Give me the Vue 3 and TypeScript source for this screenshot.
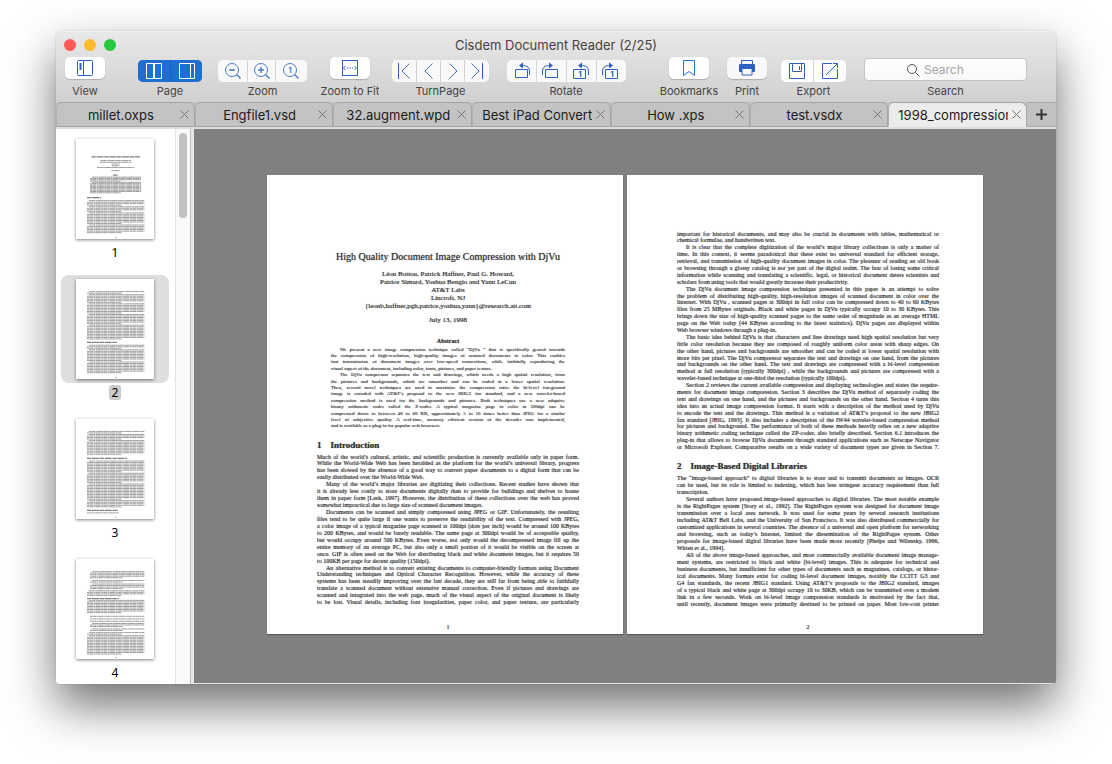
<script setup lang="ts">
import { ref } from 'vue'

interface Line { text: string; first: boolean; last: boolean }
interface Row { x: number; y: number; w: number }

const tabs = ['millet.oxps', 'Engfile1.vsd', '32.augment.wpd', 'Best iPad Convert', 'How .xps', 'test.vsdx', '1998_compression']
const activeTab = ref(6)
const selectedPage = ref(2)
const query = ref('')

function toLines(paragraphs: string[], firstIndented: boolean, lastOpen = false): Line[] {
  return paragraphs.flatMap((p, pi) => {
    const rows = p.trim().split('\n')
    return rows.map((text, i) => ({
      text,
      first: i === 0 && (pi > 0 || firstIndented),
      last: i === rows.length - 1 && !(lastOpen && pi === paragraphs.length - 1),
    }))
  })
}

const authors = [
  'Léon Bottou, Patrick Haffner, Paul G. Howard,',
  'Patrice Simard, Yoshua Bengio and Yann LeCun',
  'AT&T Labs',
  'Lincroft, NJ',
  '{leonb,haffner,pgh,patrice,yoshua,yann}@research.att.com',
]

const abstractText = toLines([
`We present a new image compression technique called “DjVu ” that is specifically geared towards
the compression of high-resolution, high-quality images of scanned documents in color. This enables
fast transmission of document images over low-speed connections, while faithfully reproducing the
visual aspect of the document, including color, fonts, pictures, and paper texture.`,
`The DjVu compressor separates the text and drawings, which needs a high spatial resolution, from
the pictures and backgrounds, which are smoother and can be coded at a lower spatial resolution.
Then, several novel techniques are used to maximize the compression ratio: the bi-level foreground
image is encoded with AT&T’s proposal to the new JBIG2 fax standard, and a new wavelet-based
compression method is used for the backgrounds and pictures. Both techniques use a new adaptive
binary arithmetic coder called the Z-coder. A typical magazine page in color at 300dpi can be
compressed down to between 40 to 60 KB, approximately 5 to 10 times better than JPEG for a similar
level of subjective quality. A real-time, memory efficient version of the decoder was implemented,
and is available as a plug-in for popular web browsers.`,
], true)

const introduction = toLines([
`Much of the world’s cultural, artistic, and scientific production is currently available only in paper form.
While the World-Wide Web has been heralded as the platform for the world’s universal library, progress
has been slowed by the absence of a good way to convert paper documents to a digital form that can be
easily distributed over the World-Wide Web.`,
`Many of the world’s major libraries are digitizing their collections. Recent studies have shown that
it is already less costly to store documents digitally than to provide for buildings and shelves to house
them in paper form [Lesk, 1997]. However, the distribution of these collections over the web has proved
somewhat impractical due to large size of scanned document images.`,
`Documents can be scanned and simply compressed using JPEG or GIF. Unfortunately, the resulting
files tend to be quite large if one wants to preserve the readability of the text. Compressed with JPEG,
a color image of a typical magazine page scanned at 100dpi (dots per inch) would be around 100 KBytes
to 200 KBytes, and would be barely readable. The same page at 300dpi would be of acceptable quality,
but would occupy around 500 KBytes. Even worse, not only would the decompressed image fill up the
entire memory of an average PC, but also only a small portion of it would be visible on the screen at
once. GIF is often used on the Web for distributing black and white document images, but it requires 50
to 100KB per page for decent quality (150dpi).`,
`An alternative method is to convert existing documents to computer-friendly formats using Document
Understanding techniques and Optical Character Recognition. However, while the accuracy of these
systems has been steadily improving over the last decade, they are still far from being able to faithfully
translate a scanned document without extensive manual correction. Even if pictures and drawings are
scanned and integrated into the web page, much of the visual aspect of the original document is likely
to be lost. Visual details, including font irregularities, paper color, and paper texture, are particularly`,
], false, true)

const continued = toLines([
`important for historical documents, and may also be crucial in documents with tables, mathematical or
chemical formulae, and handwritten text.`,
`It is clear that the complete digitization of the world’s major library collections is only a matter of
time. In this context, it seems paradoxical that there exist no universal standard for efficient storage,
retrieval, and transmission of high-quality document images in color. The pleasure of reading an old book
or browsing through a glossy catalog is not yet part of the digital realm. The fear of losing some critical
information while scanning and translating a scientific, legal, or historical document deters scientists and
scholars from using tools that would greatly increase their productivity.`,
`The DjVu document image compression technique presented in this paper is an attempt to solve
the problem of distributing high-quality, high-resolution images of scanned document in color over the
Internet. With DjVu , scanned pages at 300dpi in full color can be compressed down to 40 to 60 KBytes
files from 25 MBytes originals. Black and white pages in DjVu typically occupy 10 to 30 KBytes. This
brings down the size of high-quality scanned pages to the same order of magnitude as an average HTML
page on the Web today (44 KBytes according to the latest statistics). DjVu pages are displayed within
Web browser windows through a plug-in.`,
`The basic idea behind DjVu is that characters and line drawings need high spatial resolution but very
little color resolution because they are composed of roughly uniform color areas with sharp edges. On
the other hand, pictures and backgrounds are smoother and can be coded at lower spatial resolution with
more bits per pixel. The DjVu compressor separates the text and drawings on one hand, from the pictures
and backgrounds on the other hand. The text and drawings are compressed with a bi-level compression
method at full resolution (typically 300dpi) , while the backgrounds and pictures are compressed with a
wavelet-based technique at one-third the resolution (typically 100dpi).`,
`Section 2 reviews the current available compression and displaying technologies and states the require-
ments for document image compression. Section 3 describes the DjVu method of separately coding the
text and drawings on one hand, and the pictures and backgrounds on the other hand. Section 4 turns this
idea into an actual image compression format. It starts with a description of the method used by DjVu
to encode the text and the drawings. This method is a variation of AT&T’s proposal to the new JBIG2
fax standard [JBIG, 1993]. It also includes a description of the IW44 wavelet-based compression method
for pictures and background. The performance of both of these methods heavily relies on a new adaptive
binary arithmetic coding technique called the ZP-coder, also briefly described. Section 6.1 introduces the
plug-in that allows to browse DjVu documents through standard applications such as Netscape Navigator
or Microsoft Explorer. Comparative results on a wide variety of document types are given in Section 7.`,
], false, true)

const libraries = toLines([
`The “image-based approach” to digital libraries is to store and to transmit documents as images. OCR
can be used, but its role is limited to indexing, which has less stringent accuracy requirement than full
transcription.`,
`Several authors have proposed image-based approaches to digital libraries. The most notable example
is the RightPages system [Story et al., 1992]. The RightPages system was designed for document image
transmission over a local area network. It was used for some years by several research institutions
including AT&T Bell Labs, and the University of San Francisco. It was also distributed commercially for
customized applications in several countries. The absence of a universal and open platform for networking
and browsing, such as today’s Internet, limited the dissemination of the RightPages system. Other
proposals for image-based digital libraries have been made more recently [Phelps and Wilensky, 1996,
Witten et al., 1994].`,
`All of the above image-based approaches, and most commercially available document image manage-
ment systems, are restricted to black and white (bi-level) images. This is adequate for technical and
business documents, but insufficient for other types of documents such as magazines, catalogs, or histor-
ical documents. Many formats exist for coding bi-level document images, notably the CCITT G3 and
G4 fax standards, the recent JBIG1 standard. Using AT&T’s proposals to the JBIG2 standard, images
of a typical black and white page at 300dpi occupy 10 to 30KB, which can be transmitted over a modem
link in a few seconds. Work on bi-level image compression standards is motivated by the fact that,
until recently, document images were primarily destined to be printed on paper. Most low-cost printer`,
], false, true)

/* Rows of a paragraph block: `counts` holds the number of rows per paragraph. */
function block(y: number, counts: number[], x = 50, w = 262, pitch = 7): Row[] {
  const rows: Row[] = []
  for (const n of counts) {
    for (let i = 0; i < n; i++) {
      const indent = i === 0 ? 9 : 0
      const width = i === n - 1 && n > 1 ? w * 0.6 : w
      rows.push({ x: x + indent, y, w: width - indent })
      y += pitch
    }
  }
  return rows
}
const centred = (y: number, w: number): Row => ({ x: 181 - w / 2, y, w })

const thumbs = [
  {
    n: 1,
    rows: [centred(99, 141), centred(107, 144), centred(115, 36), centred(123, 36), centred(131, 171), centred(145, 40),
      ...block(175, [4, 9], 64, 234, 6), ...block(283, [4, 4, 8, 6])],
    heads: [centred(82, 221), centred(166, 24), { x: 50, y: 269, w: 65 }],
  },
  {
    n: 2,
    rows: [...block(58, [2, 6, 7, 7, 10]), ...block(304, [3, 8, 8])],
    heads: [{ x: 50, y: 291, w: 136 }],
  },
  {
    n: 3,
    rows: [...block(57, [2, 4, 10]), ...block(193, [8, 7, 11, 5]), { x: 50, y: 431, w: 146 }],
    heads: [{ x: 50, y: 181, w: 184 }, { x: 50, y: 419, w: 142 }],
  },
  {
    n: 4,
    rows: [...block(58, [5], 64, 248), ...block(99, [2], 64, 248), ...block(115, [4], 64, 248), ...block(146, [4]),
      ...block(190, [9]), ...block(263, [1], 55, 257), ...block(275, [1], 55, 257), ...block(286, [1], 55, 257),
      ...block(296, [3], 64, 248), ...block(321, [2], 64, 248), ...block(338, [2, 13])],
    heads: [{ x: 50, y: 182, w: 145 }],
  },
]
</script>

<template>
  <div class="desktop">
    <main class="window">
      <header class="titlebar">
        <div class="title-row">
          <div class="lights">
            <button class="light red" aria-label="Close"></button>
            <button class="light yellow" aria-label="Minimize"></button>
            <button class="light green" aria-label="Full screen"></button>
          </div>
          <h1>Cisdem Document Reader (2/25)</h1>
        </div>

        <div class="toolbar">
          <div class="tool view">
            <div class="slot"><button class="pill" aria-label="View">
              <svg width="18" height="18"><rect x="1.500" y="1.500" width="15" height="15" rx="1" /><path d="M7.500 1.500v15" /><path d="M4.500 4v7" stroke-width="2" /></svg>
            </button></div>
            <span>View</span>
          </div>

          <div class="tool page-mode">
            <div class="slot"><div class="seg selected low">
              <button aria-label="Two pages"><svg width="18" height="18"><path d="M1.500 1.500h15v15h-15zM8.500 1.500v15M9.500 1.500v15" /></svg></button>
              <button aria-label="Single page"><svg width="18" height="18"><path d="M1.500 1.500h15v15h-15zM12.500 1.500v15" /></svg></button>
            </div></div>
            <span>Page</span>
          </div>

          <div class="tool zoom">
            <div class="slot"><div class="seg low lens">
              <button aria-label="Zoom out"><svg width="18" height="18"><circle cx="8" cy="8" r="6.500" /><path d="M12.500 12.500l4 4M5 8h6" stroke-width="1.500" /></svg></button>
              <button aria-label="Zoom in"><svg width="18" height="18"><circle cx="8" cy="8" r="6.500" /><path d="M12.500 12.500l4 4M5 8h6M8 5v6" stroke-width="1.500" /></svg></button>
              <button aria-label="Actual size"><svg width="18" height="18"><circle cx="8" cy="8" r="6.500" /><path d="M12.500 12.500l4 4" stroke-width="1.500" /><text x="8" y="11">1</text></svg></button>
            </div></div>
            <span>Zoom</span>
          </div>

          <div class="tool fit">
            <div class="slot"><button class="pill" aria-label="Zoom to Fit">
              <svg width="18" height="18"><rect x="1.500" y="1.500" width="15" height="15" /><path d="M4.500 7l-2 2 2 2M13.500 7l2 2-2 2" /><path d="M6 9h6" stroke-dasharray="1.500 1" /></svg>
            </button></div>
            <span>Zoom to Fit</span>
          </div>

          <div class="tool turn">
            <div class="slot"><div class="seg low">
              <button aria-label="First page"><svg width="18" height="18"><path d="M3.500 1v16" /><path class="thin" d="M14.500 1.500L7 9l7.500 7.500" /></svg></button>
              <button aria-label="Previous page"><svg width="18" height="18"><path class="thin" d="M12.500 1.500L5 9l7.500 7.500" /></svg></button>
              <button aria-label="Next page"><svg width="18" height="18"><path class="thin" d="M5.500 1.500L13 9l-7.500 7.500" /></svg></button>
              <button aria-label="Last page"><svg width="18" height="18"><path class="thin" d="M3.500 1.500L11 9l-7.500 7.500" /><path d="M14.500 1v16" /></svg></button>
            </div></div>
            <span>TurnPage</span>
          </div>

          <div class="tool rotate">
            <div class="slot"><div class="seg low">
              <button aria-label="Rotate all left"><svg width="20" height="18"><path d="M4.500 7.500h12v8h-12zM18.500 13V9q0-5-6-5.500H9" /><path class="tip" d="M8 3.500l4-3v6z" /></svg></button>
              <button aria-label="Rotate all right"><svg width="20" height="18"><path d="M4.500 7.500h12v8h-12zM1.500 13V9q0-5 6-5.500H11" /><path class="tip" d="M12 3.500l-4-3v6z" /></svg></button>
              <button aria-label="Rotate page left"><svg width="20" height="18"><path d="M2.500 7.500h12v9h-12zM17.500 13V9q0-5-6-5.500H9" /><path class="tip" d="M7 3.500l4-3v6z" /><text x="9" y="15">1</text></svg></button>
              <button aria-label="Rotate page right"><svg width="20" height="18"><path d="M4.500 7.500h12v9h-12zM1.500 13V9q0-5 6-5.500H11" /><path class="tip" d="M12 3.500l-4-3v6z" /><text x="11" y="15">1</text></svg></button>
            </div></div>
            <span>Rotate</span>
          </div>

          <div class="tool bookmarks">
            <div class="slot"><button class="pill" aria-label="Bookmarks">
              <svg width="18" height="18"><path class="bright" d="M3.500 1.500h11v15l-5.500-4-5.500 4z" /></svg>
            </button></div>
            <span>Bookmarks</span>
          </div>

          <div class="tool print">
            <div class="slot"><button class="pill soft" aria-label="Print">
              <svg width="18" height="18"><path d="M3.500 5V1.500h11V5" /><path class="solid" d="M1 6q0-1 1-1h14q1 0 1 1v6q0 1-1 1H2q-1 0-1-1z" /><path class="paper" d="M4 9.500h10v6.500H4z" /></svg>
            </button></div>
            <span>Print</span>
          </div>

          <div class="tool export">
            <div class="slot"><div class="seg low white">
              <button aria-label="Save"><svg width="18" height="18"><path d="M1.500 1.500h15v15h-15zM4.500 1.500v8h9v-8M11.500 4v4" /></svg></button>
              <button aria-label="Export"><svg width="18" height="18"><path d="M11 1.500H1.500v15h15V7M5 13L16.500 1.500M12 1.500h4.500V6" /></svg></button>
            </div></div>
            <span>Export</span>
          </div>

          <div class="tool search">
            <div class="slot">
              <div class="field">
                <svg width="14" height="14"><circle cx="6" cy="6" r="4.500" /><path d="M9.500 9.500l4 4" /></svg>
                <input id="search" v-model="query" type="text" placeholder="Search" />
              </div>
            </div>
            <label for="search">Search</label>
          </div>
        </div>
      </header>

      <nav class="tabs">
        <div v-for="(name, i) in tabs" :key="name" class="tab" :class="{ active: i === activeTab }">
          <button class="name" @click="activeTab = i">{{ name }}</button>
          <button class="close" :aria-label="'Close ' + name">
            <svg width="9" height="9"><path d="M.5.5l8 8M8.500.5l-8 8" /></svg>
          </button>
        </div>
        <button class="add" aria-label="New tab"><svg width="13" height="13"><path d="M6.500 1v11M1 6.500h11" /></svg></button>
      </nav>

      <div class="body">
        <aside class="sidebar">
          <div class="list">
            <button v-for="t in thumbs" :key="t.n" class="thumb" :class="{ selected: t.n === selectedPage }" @click="selectedPage = t.n">
              <span class="frame">
                <svg class="mini" viewBox="0 0 356 459" preserveAspectRatio="none">
                  <path v-for="(r, i) in t.rows" :key="i" class="row" :d="`M${r.x} ${r.y}h${r.w}`" />
                  <path v-for="(r, i) in t.heads" :key="'h' + i" class="head" :d="`M${r.x} ${r.y}h${r.w}`" />
                  <path class="row" d="M178 452h6" />
                </svg>
              </span>
              <span class="number">{{ t.n }}</span>
            </button>
          </div>
          <div class="scroll"><div class="handle"></div></div>
        </aside>

        <section class="viewer">
          <article class="sheet">
            <h2 class="doc-title">High Quality Document Image Compression with DjVu</h2>
            <div class="authors"><div v-for="a in authors" :key="a">{{ a }}</div></div>
            <div class="date">July 13, 1998</div>
            <h3 class="abstract-title">Abstract</h3>
            <div class="copy abstract">
              <div v-for="(l, i) in abstractText" :key="i" class="line" :class="{ first: l.first, last: l.last }">{{ l.text }}</div>
            </div>
            <h3 class="section"><span>1</span>Introduction</h3>
            <div class="copy intro">
              <div v-for="(l, i) in introduction" :key="i" class="line" :class="{ first: l.first, last: l.last }">{{ l.text }}</div>
            </div>
            <footer>1</footer>
          </article>
          <article class="sheet second">
            <div class="copy continued">
              <div v-for="(l, i) in continued" :key="i" class="line" :class="{ first: l.first, last: l.last }">{{ l.text }}</div>
            </div>
            <h3 class="section"><span>2</span>Image-Based Digital Libraries</h3>
            <div class="copy libraries">
              <div v-for="(l, i) in libraries" :key="i" class="line" :class="{ first: l.first, last: l.last }">{{ l.text }}</div>
            </div>
            <footer>2</footer>
          </article>
        </section>
      </div>
    </main>
  </div>
</template>

<style>
body { background: #fff; }
</style>

<style scoped>
* { box-sizing: border-box; margin: 0; }
.desktop {
  height: 100vh;
  padding: 31px 56px 80px;
  overflow: hidden;
  font-family: Inter, Roboto, "Liberation Sans", sans-serif;
  color: #444;
}
.window {
  display: flex;
  flex-direction: column;
  height: 100%;
  border-radius: 5px;
  background: #ececec;
  box-shadow: 0 0 1px rgba(0, 0, 0, .5), 0 22px 48px rgba(0, 0, 0, .56);
}
button { border: 0; padding: 0; background: none; font: inherit; color: inherit; }
svg { display: block; fill: none; stroke: #2f5fc0; }
svg text { fill: #2f5fc0; stroke: none; font-size: 8px; font-weight: 700; text-anchor: middle; }

.titlebar {
  height: 71px;
  flex: none;
  border-radius: 5px 5px 0 0;
  border-top: 1px solid #f4f4f4;
  background: linear-gradient(#e8e8e8, #d0d0d0);
}
.title-row { display: grid; grid-template-columns: 1fr auto 1fr; height: 25px; align-items: center; padding: 0 8px; }
.title-row h1 { font-size: 13px; font-weight: 400; color: #444; line-height: 24px; }
.lights { display: flex; gap: 8px; }
.light { width: 12px; height: 12px; border-radius: 50%; }
.red { background: #fc5b57; }
.yellow { background: #fdbc2e; }
.green { background: #27c93f; }

.toolbar { display: flex; padding: 0 29px 0 9px; }
.tool { display: flex; flex-direction: column; align-items: center; font-size: 11px; line-height: 14px; color: #444; white-space: nowrap; }
.slot { height: 27px; display: flex; align-items: flex-start; }
.tool.search .slot { padding-top: 1px; width: 100%; }
.low { margin-top: 3px; }
.view { width: 40px; }
.page-mode { width: 64px; margin-left: 33px; }
.zoom { width: 89px; margin-left: 16px; }
.fit { width: 60px; margin-left: 13px; }
.turn { width: 97px; margin-left: 12px; }
.rotate { width: 118px; margin-left: 18px; }
.bookmarks { width: 58px; margin-left: auto; }
.print { width: 40px; margin-left: 9px; }
.export { width: 65px; margin-left: 14px; }
.search { width: 163px; margin-left: 18px; }
.pill { width: 40px; height: 22px; border-radius: 5px; background: #fff; box-shadow: 0 1px 1px rgba(0, 0, 0, .2); display: grid; place-items: center; }
.pill.soft { background: #f8f8f8; }
.seg { display: flex; height: 22px; gap: 1px; border-radius: 5px; overflow: hidden; background: #d4d4d4; }
.seg button { display: grid; place-items: center; background: #f9f9f9; }
.seg.white button { background: #fff; }
.selected.seg { background: #1a5cb4; gap: 0; }
.selected.seg button { width: 32px; background: #1f6ed2; }
.selected.seg button + button { border-left: 1px dashed #1857b0; }
.selected.seg svg { stroke: #fff; }
.lens button { width: 29px; }
.lens button:nth-child(2) { width: 27px; }
.lens button:last-child { width: 31px; padding-right: 2px; }
.lens svg { stroke: #4a7cc8; }
.lens svg text { fill: #4a7cc8; }
.turn .seg button { width: 23px; }
.turn .seg button:first-child, .turn .seg button:last-child { width: 24px; }
.rotate .seg button { width: 29px; }
.export .seg button { width: 32px; }
.bright { stroke: #1f72d8; }
.solid { fill: #2f5fc0; stroke: none; }
.tip { fill: #2f5fc0; stroke: none; }
.paper { fill: #fff; stroke: #2f5fc0; }
.thin { stroke: #4470c4; }

.field {
  display: flex; width: 100%; height: 23px; align-items: center; gap: 4px; padding-left: 41px;
  border: 1px solid #c4c4c4; border-radius: 4px; background: linear-gradient(#fff, #f8f8f8);
}
.field svg { flex: none; stroke: #555; }
.field input { width: 100%; min-width: 0; border: 0; outline: 0; padding: 0; background: none; font: inherit; font-size: 12px; color: #333; }
.field input::placeholder { color: #a6a6a6; opacity: 1; }

.tabs { display: flex; flex: none; height: 27px; background: #c2c2c2; border-bottom: 2px solid #dedede; }
.tab {
  flex: 1 1 0; min-width: 0; display: flex; align-items: center; gap: 1px; padding: 0 2px 0 9px;
  border: 1px solid #a4a4a4; border-left-color: #b0b0b0; border-radius: 6px 6px 0 0; background: #c3c3c3; color: #1c1c1c;
}
.tab.active { background: #ececec; border-bottom-color: #ececec; }
.name { flex: 1; min-width: 0; font-size: 13px; line-height: 20px; overflow: hidden; white-space: nowrap; }
.close { flex: none; width: 15px; height: 15px; display: grid; place-items: center; }
.close svg { stroke: #777; }
.add { flex: none; width: 29px; display: grid; place-items: center; border-top: 1px solid #a9a9a9; border-bottom: 1px solid #a9a9a9; }
.add svg { stroke: #333; stroke-width: 2; }

.body { flex: 1; min-height: 0; display: flex; border-radius: 0 0 4px 4px; overflow: hidden; }
.sidebar { flex: none; width: 138px; display: flex; background: #e8e8e8; }
.list { flex: 1; overflow: hidden; background: #fff; padding: 6px 6px 0 5px; display: flex; flex-direction: column; gap: 15px; }
.thumb { flex: none; display: flex; flex-direction: column; align-items: center; gap: 2px; }
.frame { width: 108px; height: 108px; border-radius: 8px; display: grid; place-items: center; }
.mini { width: 78px; height: 100px; background: #fff; box-shadow: 0 1px 3px rgba(0, 0, 0, .5); }
.row { stroke: #8c8c8c; stroke-width: 4; stroke-dasharray: 11 1 17 2 7 1 24 2; }
.head { stroke: #808080; stroke-width: 6; stroke-dasharray: 20 3 32 3; }
.number { padding: 0 3px; border-radius: 3px; font-family: "Noto Sans", sans-serif; font-size: 12px; line-height: 15px; color: #000; }
.thumb.selected .frame { background: #dedede; }
.thumb.selected .number { background: #cacaca; }
.scroll { width: 16px; flex: none; padding: 4px 3px; background: #f9f9f9; border-left: 1px solid #e4e4e4; border-right: 1px solid #bcbcbc; margin-right: 3px; }
.handle { width: 8px; height: 85px; border-radius: 4px; background: #c1c1c1; }

.viewer { flex: 1; display: flex; gap: 4px; align-items: center; justify-content: center; padding-bottom: 4px; background: #808080; border-bottom: 1px solid #e4e4e4; }
.sheet {
  flex: none; display: flex; flex-direction: column; width: 356px; height: 459px; padding: 75px 44px 0 50px;
  background: #fff; color: #333; box-shadow: 0 1px 1px rgba(0, 0, 0, .3);
  font-family: "Liberation Serif", serif; font-size: 6px; line-height: 6px;
  text-shadow: 0 0 1px rgba(0, 0, 0, .6);
}
.sheet.second { padding-top: 56px; }
.doc-title { font-size: 10px; line-height: 14px; font-weight: 400; text-align: center; white-space: nowrap; }
.authors, .date { margin-top: 6px; font-size: 7px; line-height: 8px; text-align: center; }
.abstract-title { margin-top: 13px; font-size: 6px; line-height: 8px; text-align: center; }
.section { display: flex; gap: 9px; margin: 9px 0 3px; font-size: 9px; line-height: 12px; }
.copy { display: flex; flex-direction: column; justify-content: space-between; }
.line { white-space: nowrap; text-align: justify; text-align-last: justify; }
.line.first { padding-left: 9px; }
.line.last { text-align-last: left; }
.abstract { height: 83px; margin: 2px 14px 0; font-size: 5px; }
.intro { height: 152px; }
.continued { height: 220px; }
.libraries { height: 132px; }
.sheet footer { margin-top: auto; padding-bottom: 4px; text-align: center; }
</style>
